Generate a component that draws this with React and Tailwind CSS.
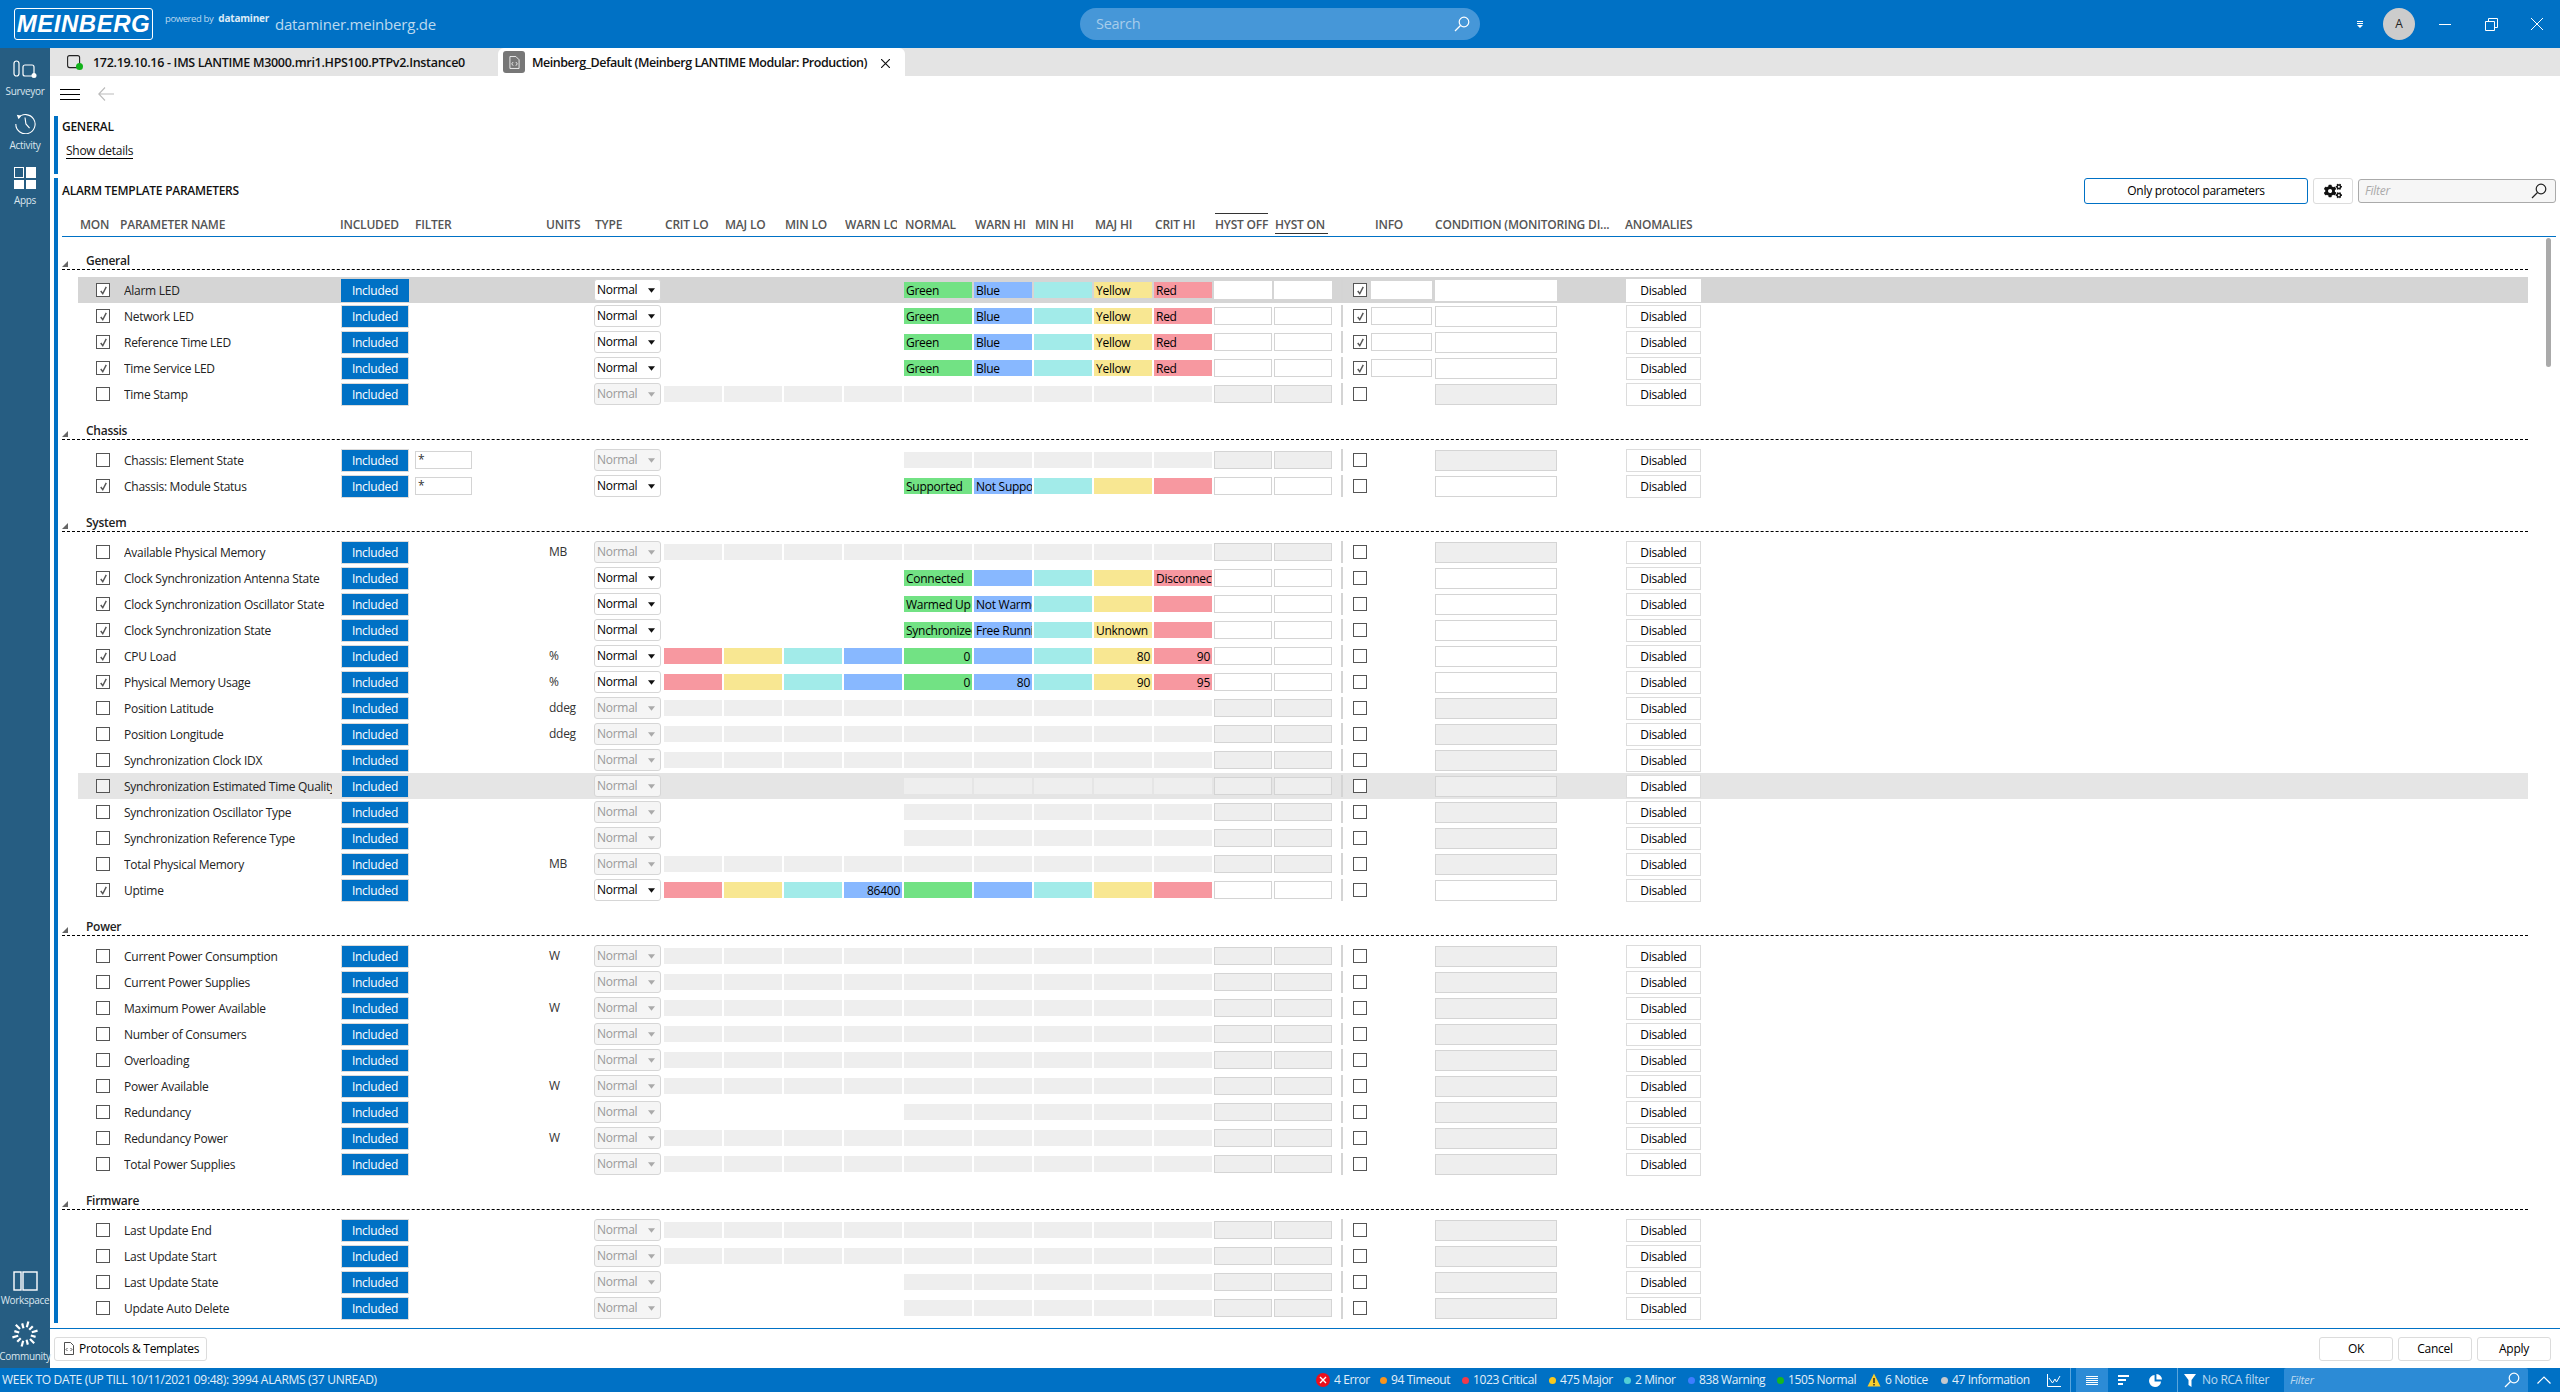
import React from 'react';
import { FaCogs } from 'react-icons/fa';

const rowGrid = 'grid grid-cols-[46px_217px_68px_140px_45px_70px_60px_60px_60px_60px_70px_60px_60px_60px_60px_60px_67px_12px_18px_64px_191px_75px_1fr] items-center h-[26px]';
const headGrid = 'grid grid-cols-[40px_220px_75px_131px_49px_70px_60px_60px_60px_60px_70px_60px_60px_60px_60px_60px_100px_60px_190px_100px]';

const loColors = ['bg-[#f798a0]', 'bg-[#f8e792]', 'bg-[#a2ebe9]', 'bg-[#88b8ff]'];
const hiColors = ['bg-[#72e284]', 'bg-[#88b8ff]', 'bg-[#a2ebe9]', 'bg-[#f8e792]', 'bg-[#f798a0]'];

const led = ['Green', 'Blue', '', 'Yellow', 'Red'];

const groups = [
  {
    title: 'General',
    rows: [
      { name: 'Alarm LED', mon: true, active: true, info: true, lo: 'none', hi: led, selected: true },
      { name: 'Network LED', mon: true, active: true, info: true, lo: 'none', hi: led },
      { name: 'Reference Time LED', mon: true, active: true, info: true, lo: 'none', hi: led },
      { name: 'Time Service LED', mon: true, active: true, info: true, lo: 'none', hi: led },
      { name: 'Time Stamp' },
    ],
  },
  {
    title: 'Chassis',
    rows: [
      { name: 'Chassis: Element State', filter: '*', lo: 'none' },
      { name: 'Chassis: Module Status', filter: '*', mon: true, active: true, lo: 'none', hi: ['Supported', 'Not Supported', '', '', ''] },
    ],
  },
  {
    title: 'System',
    rows: [
      { name: 'Available Physical Memory', units: 'MB' },
      { name: 'Clock Synchronization Antenna State', mon: true, active: true, lo: 'none', hi: ['Connected', '', '', '', 'Disconnected'] },
      { name: 'Clock Synchronization Oscillator State', mon: true, active: true, lo: 'none', hi: ['Warmed Up', 'Not Warmed Up', '', '', ''] },
      { name: 'Clock Synchronization State', mon: true, active: true, lo: 'none', hi: ['Synchronized', 'Free Running', '', 'Unknown', ''] },
      { name: 'CPU Load', units: '%', mon: true, active: true, lo: ['', '', '', ''], hi: [0, '', '', 80, 90] },
      { name: 'Physical Memory Usage', units: '%', mon: true, active: true, lo: ['', '', '', ''], hi: [0, 80, '', 90, 95] },
      { name: 'Position Latitude', units: 'ddeg' },
      { name: 'Position Longitude', units: 'ddeg' },
      { name: 'Synchronization Clock IDX' },
      { name: 'Synchronization Estimated Time Quality', lo: 'none', hover: true },
      { name: 'Synchronization Oscillator Type', lo: 'none' },
      { name: 'Synchronization Reference Type', lo: 'none' },
      { name: 'Total Physical Memory', units: 'MB' },
      { name: 'Uptime', mon: true, active: true, lo: ['', '', '', 86400], hi: ['', '', '', '', ''] },
    ],
  },
  {
    title: 'Power',
    rows: [
      { name: 'Current Power Consumption', units: 'W' },
      { name: 'Current Power Supplies' },
      { name: 'Maximum Power Available', units: 'W' },
      { name: 'Number of Consumers' },
      { name: 'Overloading' },
      { name: 'Power Available', units: 'W' },
      { name: 'Redundancy', lo: 'none' },
      { name: 'Redundancy Power', units: 'W' },
      { name: 'Total Power Supplies' },
    ],
  },
  {
    title: 'Firmware',
    rows: [
      { name: 'Last Update End' },
      { name: 'Last Update Start' },
      { name: 'Last Update State', lo: 'none' },
      { name: 'Update Auto Delete', lo: 'none' },
      { name: '', lo: 'none' },
    ],
  },
];

const alarmCounts = [
  { w: 'w-[64px]', label: '4 Error', icon: 'error' },
  { w: 'w-[82px]', label: '94 Timeout', dot: 'bg-[#f7941d]' },
  { w: 'w-[87px]', label: '1023 Critical', dot: 'bg-[#f03a4b]' },
  { w: 'w-[75px]', label: '475 Major', dot: 'bg-[#f7c91f]' },
  { w: 'w-[64px]', label: '2 Minor', dot: 'bg-[#52cfd6]' },
  { w: 'w-[89px]', label: '838 Warning', dot: 'bg-[#3d7dff]' },
  { w: 'w-[90px]', label: '1505 Normal', dot: 'bg-[#17b81f]' },
  { w: 'w-[74px]', label: '6 Notice', icon: 'notice' },
  { w: 'w-[106px]', label: '47 Information', dot: 'bg-[#c4c9ce]' },
];

function SearchGlass({ className }) {
  return (
    <svg viewBox="0 0 16 16" className={className} fill="none" stroke="currentColor" strokeWidth="1.2">
      <circle cx="10" cy="6" r="4.8" />
      <path d="M6.5 9.5 1 15" />
    </svg>
  );
}

function Check({ checked, className = '', bg = 'bg-white' }) {
  return (
    <div className={`w-[14px] h-[14px] border border-[#555] ${bg} flex items-center justify-center ${className}`}>
      {checked && (
        <svg viewBox="0 0 12 12" className="w-[11px] h-[11px]" fill="none" stroke="#555" strokeWidth="1.6">
          <path d="M3 6.5 5.2 9.5 9 2" />
        </svg>
      )}
    </div>
  );
}

function ThresholdCell({ value, color }) {
  const numeric = typeof value === 'number';
  return (
    <div className={`h-4 mr-[2px] ${color} overflow-hidden whitespace-nowrap leading-[17px] px-[2px] text-black ${numeric ? 'text-right' : ''}`}>
      {value}
    </div>
  );
}

function ParamRow({ row }) {
  const { name, mon, units, filter, active, info, selected, hover } = row;
  const lo = row.lo ?? 'gray';
  const bg = selected ? 'bg-[#d5d5d5]' : hover ? 'bg-[#e5e5e5]' : '';
  const inputBorder = selected ? 'border-transparent' : 'border-[#d4d4d4]';

  return (
    <div className={`${rowGrid} ${bg}`}>
      <Check checked={mon} className="ml-[18px]" bg={hover ? 'bg-[#f2f2f2]' : 'bg-white'} />
      <div className="overflow-hidden whitespace-nowrap mr-[9px] pt-[1px] text-[#222]">{name}</div>
      <div className={`h-[23px] mt-[1px] border ${selected ? 'border-transparent' : 'border-[#dcdcdc]'} bg-[#0071c5] text-white flex items-center justify-center`}>Included</div>
      <div>
        {filter && <div className="ml-[6px] w-[57px] h-[18px] border border-[#d4d4d4] bg-white leading-[16px] pl-[2px] text-[#333]">{filter}</div>}
      </div>
      <div className="text-[#333]">{units}</div>
      <div className={`w-[67px] h-[22px] rounded-[3px] border border-[#d6d6d6] flex items-center justify-between pl-[2px] pr-[5px] ${active ? 'bg-white text-black' : 'bg-[#f5f5f5] text-[#999]'}`}>
        Normal
        <svg viewBox="0 0 8 5" className="w-[7px] h-[5px]"><path d="M0 0h8L4 5z" fill={active ? '#111' : '#aaa'} /></svg>
      </div>
      {[0, 1, 2, 3].map((i) =>
        lo === 'none' ? (
          <div key={i} />
        ) : (
          <ThresholdCell key={i} value={lo === 'gray' ? '' : lo[i]} color={lo === 'gray' ? 'bg-[#eeeeee]' : loColors[i]} />
        )
      )}
      {[0, 1, 2, 3, 4].map((i) => (
        <ThresholdCell key={i} value={row.hi ? row.hi[i] : ''} color={row.hi ? hiColors[i] : 'bg-[#eeeeee]'} />
      ))}
      <div className={`h-[18px] mr-[2px] border ${inputBorder} ${active ? 'bg-white' : 'bg-[#eeeeee]'}`} />
      <div className={`h-[18px] mr-[9px] border ${inputBorder} ${active ? 'bg-white' : 'bg-[#eeeeee]'}`} />
      <div className="w-[2px] h-[22px] bg-[#d4d4d4]" />
      <Check checked={info} />
      <div>{info && <div className={`w-[61px] h-[18px] border ${inputBorder} bg-white`} />}</div>
      <div className={`w-[122px] h-[21px] border ${inputBorder} ${active ? 'bg-white' : 'bg-[#eeeeee]'}`} />
      <div className={`h-[23px] mt-[1px] border ${selected ? 'border-transparent' : 'border-[#dcdcdc]'} bg-white flex items-center justify-center text-black`}>Disabled</div>
      <div />
    </div>
  );
}

function Group({ group }) {
  return (
    <div>
      <div className="h-[33px] mb-[7px] mr-[28px] flex items-end border-b border-dashed border-black">
        <svg viewBox="0 0 6 6" className="w-[6px] h-[6px] mb-[2px]"><path d="M6 0v6H0z" fill="#666" /></svg>
        <span className="ml-[18px] font-semibold text-[#222] leading-[16px]">{group.title}</span>
      </div>
      <div className="ml-[16px] mr-[28px]">
        {group.rows.map((r, i) => (
          <ParamRow key={i} row={r} />
        ))}
      </div>
    </div>
  );
}

function SideItem({ label, children }) {
  return (
    <div className="flex flex-col items-center">
      {children}
      <span className="text-[10px] leading-[14px] text-[#dbe6ee] whitespace-nowrap tracking-[-0.3px]">{label}</span>
    </div>
  );
}

function Sidebar() {
  return (
    <div className="w-[50px] shrink-0 bg-[#265d82] flex flex-col items-center justify-between pt-[12px] pb-[5px] text-white">
      <div className="flex flex-col items-center">
        <SideItem label="Surveyor">
          <svg viewBox="0 0 24 18" className="w-[24px] h-[18px] mb-[6px]" fill="none" stroke="#fff" strokeWidth="1.2">
            <rect x="1" y="1" width="5" height="15" rx="2.5" />
            <rect x="10" y="5" width="11" height="11" rx="2" />
            <circle cx="21" cy="15.5" r="2.5" fill="#fff" stroke="none" />
          </svg>
        </SideItem>
        <SideItem label="Activity">
          <svg viewBox="0 0 24 24" className="w-[22px] h-[22px] mt-[14px] mb-[4px]" fill="none" stroke="#fff" strokeWidth="1.2">
            <path d="M4.5 6.5A10.5 10.5 0 1 1 2 13" />
            <path d="M3 3l5 1-3 4z" fill="#fff" stroke="none" />
            <path d="M12 6l1 7 4 4.5" />
          </svg>
        </SideItem>
        <SideItem label="Apps">
          <div className="grid grid-cols-2 gap-[2px] w-[22px] h-[22px] mt-[15px] mb-[4px]">
            <div className="border border-white" />
            <div className="bg-white" />
            <div className="bg-white" />
            <div className="bg-white" />
          </div>
        </SideItem>
      </div>
      <div className="flex flex-col items-center">
        <SideItem label="Workspace">
          <svg viewBox="0 0 25 20" className="w-[25px] h-[20px] mb-[2px]" fill="none" stroke="#fff" strokeWidth="1.4">
            <rect x="1" y="1" width="7" height="18" />
            <rect x="10" y="1" width="14" height="18" />
          </svg>
        </SideItem>
        <SideItem label="Community">
          <svg viewBox="0 0 28 28" className="w-[28px] h-[28px] mt-[13px] mb-[1px]" stroke="#fff" strokeWidth="2.2">
            {[0, 30, 60, 90, 120, 150, 180, 210, 240, 270, 300, 330].map((a) => (
              <path key={a} d={a % 60 === 0 ? 'M14 1v6' : 'M14 3v5'} transform={`rotate(${a + 15} 14 14)`} />
            ))}
          </svg>
        </SideItem>
      </div>
    </div>
  );
}

function TopBar() {
  return (
    <div className="h-12 shrink-0 bg-[#0071c5] flex items-center text-white">
      <div className="ml-[14px] w-[139px] h-8 border border-white rounded-[3px] flex items-center justify-center overflow-hidden">
        <span className="italic font-bold text-[24px] leading-none font-['Liberation_Sans',sans-serif] tracking-[0.5px]">MEINBERG</span>
      </div>
      <div className="ml-[12px] w-[110px] -mt-[10px] flex items-baseline gap-[5px] whitespace-nowrap">
        <span className="text-[9.5px] text-[#bcd9ef] tracking-[-0.4px]">powered by</span>
        <span className="text-[10px] font-bold text-[#dcebf7] tracking-[-0.2px]">dataminer</span>
      </div>
      <span className="text-[15px] text-[#bcd9ef] w-[805px] tracking-[-0.2px]">dataminer.meinberg.de</span>
      <div className="w-[400px] h-8 rounded-full bg-[#4697d8] flex items-center justify-between pl-4 pr-[10px]">
        <span className="text-[14.5px] text-[#a7cdeb]">Search</span>
        <SearchGlass className="w-4 h-4 text-white" />
      </div>
      <svg viewBox="0 0 6 7" className="w-[6px] h-[7px] ml-[877px]" fill="#fff"><path d="M0 0h6v1H0zM0 2h6v1H0zM0 4h6L3 7z" /></svg>
      <div className="ml-[20px] w-8 h-8 rounded-full bg-[#cccccc] text-[#222] text-[12px] flex items-center justify-center">A</div>
      <div className="ml-[24px] w-[12px] h-px bg-white" />
      <svg viewBox="0 0 13 13" className="w-[13px] h-[13px] ml-[34px]" fill="none" stroke="#fff"><path d="M.5 3.5h9v9h-9zM3.5 3.5v-3h9v9h-3" /></svg>
      <svg viewBox="0 0 12 12" className="w-[12px] h-[12px] ml-[33px]" fill="none" stroke="#fff"><path d="M0 0l12 12M12 0 0 12" /></svg>
    </div>
  );
}

function Tabs() {
  return (
    <div className="h-7 shrink-0 bg-[#e4e4e4] flex font-semibold text-[12.5px] text-[#111]">
      <div className="w-[448px] flex items-center pl-[17px]">
        <svg viewBox="0 0 17 16" className="w-[17px] h-[16px] mr-[9px] mt-[1px]" fill="none" stroke="#222" strokeWidth="1.1">
          <rect x=".6" y=".6" width="12" height="12" rx="2" />
          <circle cx="12.5" cy="11.5" r="3.5" fill="#12b21a" stroke="none" />
        </svg>
        <span className="whitespace-nowrap tracking-[-0.3px] pt-[2px]">172.19.10.16 - IMS LANTIME M3000.mri1.HPS100.PTPv2.Instance0</span>
      </div>
      <div className="w-[407px] bg-white rounded-tl-[6px] rounded-tr-[6px] flex items-center pl-[5px]">
        <div className="w-[22px] h-[22px] rounded-[3px] bg-[#777] flex items-center justify-center mr-[7px]">
          <svg viewBox="0 0 12 14" className="w-[11px] h-[13px]" fill="none" stroke="#fff" strokeWidth=".9">
            <path d="M1 .5h6.5l3.5 3.5v9.5H1zM4.5 6.5 3 8.500l1.500 2M7.500 6.500 9 8.500l-1.500 2" />
          </svg>
        </div>
        <span className="whitespace-nowrap tracking-[-0.47px] pt-[2px]">Meinberg_Default (Meinberg LANTIME Modular: Production)</span>
        <svg viewBox="0 0 10 10" className="w-[9px] h-[9px] ml-[14px] mt-[2px]" fill="none" stroke="#111" strokeWidth="1.3"><path d="M0 0l10 10M10 0 0 10" /></svg>
      </div>
    </div>
  );
}

function Toolbar() {
  return (
    <div className="h-10 shrink-0 flex items-center pl-[10px] pb-[4px]">
      <div className="w-5 flex flex-col gap-[4px]">
        <div className="h-px bg-black" />
        <div className="h-px bg-black" />
        <div className="h-px bg-black" />
      </div>
      <svg viewBox="0 0 16 14" className="w-4 h-[14px] ml-[18px]" fill="none" stroke="#bbb" strokeWidth="1.1"><path d="M7 .5.8 7 7 13.500M1 7h15" /></svg>
    </div>
  );
}

function StatusBar() {
  return (
    <div className="h-6 shrink-0 bg-[#0071c5] flex items-center text-[12px] text-[#e3eff8] whitespace-nowrap">
      <div className="w-[1316px] pl-[2px] tracking-[-0.3px]">WEEK TO DATE (UP TILL 10/11/2021 09:48): 3994 ALARMS (37 UNREAD)</div>
      {alarmCounts.map((a) => (
        <div key={a.label} className={`${a.w} flex items-center gap-[4px] tracking-[-0.4px]`}>
          {a.icon === 'error' && (
            <div className="w-[14px] h-[14px] rounded-full bg-[#ec0f1c] flex items-center justify-center">
              <svg viewBox="0 0 8 8" className="w-2 h-2" stroke="#fff" strokeWidth="1.4"><path d="M1 1l6 6M7 1 1 7" /></svg>
            </div>
          )}
          {a.icon === 'notice' && (
            <svg viewBox="0 0 14 14" className="w-[14px] h-[14px]">
              <path d="M7 .5 13.500 13.500H.5z" fill="#f8ce2d" />
              <path d="M7 5v5M7 11v1.500" stroke="#222" strokeWidth="1.400" />
            </svg>
          )}
          {a.dot && <div className={`w-[7px] h-[7px] rounded-full ${a.dot}`} />}
          <span>{a.label}</span>
        </div>
      ))}
      <svg viewBox="0 0 14 13" className="w-[14px] h-[13px]" fill="none" stroke="#fff"><path d="M.5 0v12.500H14M2 4l3.500 5L8 5l1.500 3L13 2" /></svg>
      <div className="ml-[9px] h-full w-px bg-[#5aa5dc]" />
      <div className="ml-[5px] w-[32px] h-full bg-[#2c8bd6] flex items-center justify-center">
        <div className="w-3 flex flex-col gap-[1px]">
          {[0, 1, 2, 3, 4].map((i) => <div key={i} className="h-px bg-white" />)}
        </div>
      </div>
      <div className="ml-[10px] w-[11px] flex flex-col gap-[2px]">
        <div className="h-[2px] w-[11px] bg-white" />
        <div className="h-[2px] w-[8px] bg-white" />
        <div className="h-[2px] w-[5px] bg-white" />
      </div>
      <svg viewBox="0 0 14 14" className="w-[13px] h-[13px] ml-[20px]" fill="#fff"><path d="M6 1a6.500 6.500 0 1 0 7 7H6zM8 0v6h6a6 6 0 0 0-6-6z" /></svg>
      <div className="ml-[15px] h-full w-px bg-[#5aa5dc]" />
      <svg viewBox="0 0 12 13" className="w-[12px] h-[13px] ml-[6px]" fill="#fff"><path d="M0 0h12L7.500 6v7l-3-2V6z" /></svg>
      <span className="ml-[6px] w-[82px] text-[#bcd9ef] tracking-[-0.3px]">No RCA filter</span>
      <div className="w-[244px] h-full bg-[#2c8bd6] flex items-center justify-between pl-[6px] pr-2 rounded-t-[2px]">
        <span className="italic text-[#bcd9ef] text-[11.500px]">Filter</span>
        <SearchGlass className="w-4 h-4 text-white" />
      </div>
      <svg viewBox="0 0 14 8" className="w-[14px] h-2 ml-[9px]" fill="none" stroke="#fff" strokeWidth="1.2"><path d="M.5 7.500 7 1l6.500 6.500" /></svg>
    </div>
  );
}

export default function App() {
  const headers = ['MON', 'PARAMETER NAME', 'INCLUDED', 'FILTER', 'UNITS', 'TYPE', 'CRIT LO', 'MAJ LO', 'MIN LO', 'WARN LO', 'NORMAL', 'WARN HI', 'MIN HI', 'MAJ HI', 'CRIT HI', 'HYST OFF', 'HYST ON', 'INFO', 'CONDITION (MONITORING DI...', 'ANOMALIES'];

  return (
    <div className="w-[2560px] h-[1392px] overflow-hidden flex flex-col bg-white font-['Open_Sans','Noto_Sans',sans-serif] text-[12px] tracking-[-0.27px]">
      <TopBar />
      <div className="flex-1 min-h-0 flex">
        <Sidebar />
        <div className="flex-1 min-w-0 flex flex-col">
          <Tabs />
          <Toolbar />

          {/* General */}
          <div className="ml-[4px] h-[58px] mb-[4px] shrink-0 border-l-4 border-[#0071c5] pl-[4px]">
            <div className="pt-[3px] font-semibold text-[#111] leading-[16px]">GENERAL</div>
            <div className="inline-block ml-[4px] mt-[8px] text-[#111] leading-[15px] border-b border-black">Show details</div>
          </div>

          {/* Alarm template */}
          <div className="ml-[4px] flex-1 min-h-0 mb-[5px] border-l-4 border-[#0071c5] pl-[4px] flex flex-col">
            <div className="h-[26px] shrink-0 flex items-center">
              <span className="font-semibold text-[#111]">ALARM TEMPLATE PARAMETERS</span>
              <div className="ml-auto w-[224px] h-[26px] border border-[#0071c5] rounded-[3px] flex items-center justify-center text-black">Only protocol parameters</div>
              <div className="ml-[5px] w-[40px] h-[26px] border border-[#dcdcdc] rounded-[3px] flex items-center justify-center">
                <FaCogs className="w-[18px] h-[18px] text-[#111]" />
              </div>
              <div className="ml-[5px] mr-[4px] w-[198px] h-6 border border-[#aaa] rounded-[3px] bg-[#f6f6f6] flex items-center justify-between pl-[6px] pr-2">
                <span className="italic text-[#aaa]">Filter</span>
                <SearchGlass className="w-4 h-4 text-[#222]" />
              </div>
            </div>
            <div className="shrink-0 mr-[4px] h-[33px] pt-[13px] pl-[18px] border-b border-[#0071c5]">
              <div className={`${headGrid} font-semibold leading-[16px] text-[#555] tracking-[-0.2px]`}>
                {headers.map((h) => (
                  <div key={h} className="relative whitespace-nowrap">
                    <span className={h === 'WARN LO' ? 'block w-[52px] overflow-hidden' : ''}>{h}</span>
                    {h === 'HYST OFF' && <div className="absolute -top-[4px] left-0 w-[53px] h-px bg-[#333]" />}
                    {h === 'HYST ON' && <div className="absolute -bottom-[1px] left-0 w-[53px] h-px bg-[#333]" />}
                  </div>
                ))}
              </div>
            </div>
            <div className="relative flex-1 min-h-0 mr-[4px] overflow-hidden">
              {groups.map((g) => (
                <Group key={g.title} group={g} />
              ))}
              <div className="absolute top-[1px] right-[5px] w-[5px] h-[129px] rounded-full bg-[#aaaaaa]" />
            </div>
          </div>

          {/* Footer */}
          <div className="h-10 shrink-0 border-t border-[#0071c5] flex items-center pl-[4px] pr-[9px] text-black">
            <div className="w-[153px] h-[24px] border border-[#dcdcdc] rounded-[3px] flex items-center pl-[9px] gap-[5px]">
              <svg viewBox="0 0 10 13" className="w-[10px] h-[13px]" fill="none" stroke="#222" strokeWidth=".8">
                <path d="M.5.5h6l3 3v9h-9zM3.500 6 2 7.500 3.500 9M6.500 6 8 7.500 6.500 9" />
              </svg>
              Protocols &amp; Templates
            </div>
            <div className="ml-auto flex gap-[5px]">
              <div className="w-[74px] h-[24px] border border-[#dcdcdc] rounded-[3px] flex items-center justify-center">OK</div>
              <div className="w-[74px] h-[24px] border border-[#dcdcdc] rounded-[3px] flex items-center justify-center">Cancel</div>
              <div className="w-[74px] h-[24px] border border-[#dcdcdc] rounded-[3px] flex items-center justify-center">Apply</div>
            </div>
          </div>
        </div>
      </div>
      <StatusBar />
    </div>
  );
}
